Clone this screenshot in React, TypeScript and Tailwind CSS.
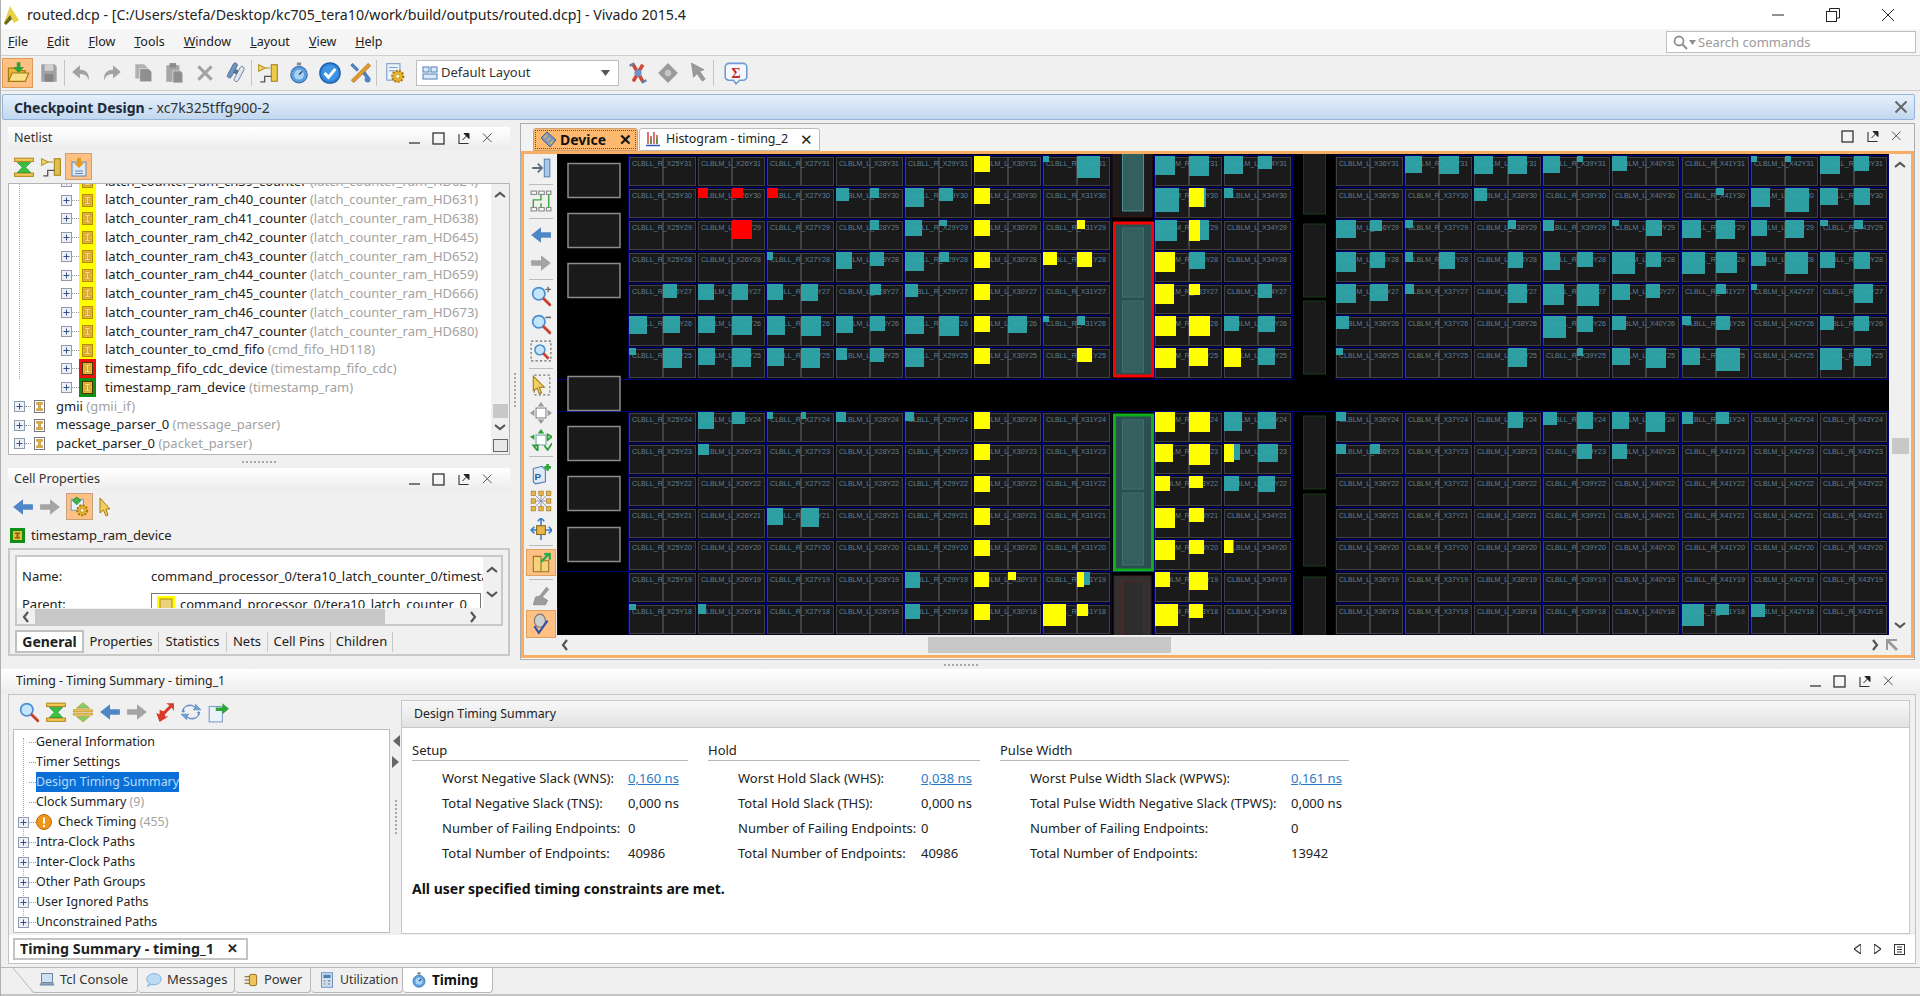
import React from "react";

const S = ({ s = 20, children }: { s?: number; children?: React.ReactNode }) => (
  <svg width={s} height={s} viewBox="0 0 20 20" className="shrink-0">{children}</svg>
);
const Mag = ({ sign }: { sign?: string }) => (
  <S s={22}>
    <circle cx="8" cy="8" r="5.6" fill="#c4e6fb" stroke="#4b90d2" strokeWidth="1.6" />
    <path d="M12.5 12.5L18 18" stroke="#c9402f" strokeWidth="2.6" strokeLinecap="round" />
    {sign === "+" && <path d="M14 4h5M16.5 1.5v5" stroke="#666" strokeWidth="1.2" />}
    {sign === "-" && <path d="M14 4h5" stroke="#666" strokeWidth="1.4" />}
  </S>
);
const BackArrow = ({ c = "#4f86c6", flip = false }: { c?: string; flip?: boolean }) => (
  <S s={22}>
    <path d={flip ? "M1 7.5h9V3l9 7-9 7v-4.500H1z" : "M19 7.5h-9V3l-9 7 9 7v-4.500h9z"} fill={c} />
  </S>
);
const Schem = ({ dim = false }: { dim?: boolean }) => (
  <S s={22}>
    <path d="M1.500 2.500l6 3-6 3z" fill="#f3d868" stroke="#b8962c" />
    <path d="M7.500 5.500H12" stroke="#b8962c" />
    <rect x="13" y="2.500" width="5.500" height="15" fill={dim ? "#e0c04a" : "#eecb4a"} stroke="#a6841c" />
    <path d="M13 13H7v5H3" stroke="#555" strokeWidth="1.200" fill="none" />
  </S>
);
const Hourglass = () => (
  <S s={22}>
    <rect x="1.500" y="2" width="17" height="3" fill="#f2c755" stroke="#b58b20" />
    <rect x="1.500" y="15.500" width="17" height="3" fill="#f2c755" stroke="#b58b20" />
    <path d="M4 6h12l-4.500 4.200L16 15H4l4.500-4.800z" fill="#37c23f" stroke="#1f8a28" strokeWidth=".6" />
  </S>
);
const Expand2 = () => (
  <S s={22}>
    <rect x="1.500" y="8" width="17" height="1.800" fill="#f2c755" stroke="#b58b20" strokeWidth=".6" />
    <rect x="1.500" y="11" width="17" height="1.800" fill="#f2c755" stroke="#b58b20" strokeWidth=".6" />
    <path d="M10 1.500l6 5H4zM10 19l6-5H4z" fill="#7ed06a" stroke="#c79a2a" strokeWidth=".7" />
  </S>
);
const Gear = ({ x = 11, y = 12, r = 5 }: { x?: number; y?: number; r?: number }) => (
  <g>
    <circle cx={x} cy={y} r={r} fill="#e9b82c" stroke="#a87a10" strokeWidth="2" strokeDasharray="1.800 1.200" />
    <circle cx={x} cy={y} r={r * 0.4} fill="#fff3c0" stroke="#a87a10" strokeWidth=".6" />
  </g>
);
const SettingsDoc = () => (
  <S s={22}>
    <rect x="2.500" y="1.500" width="12" height="15" fill="#eaf2fb" stroke="#7f9fc4" />
    <path d="M4.500 5h8M4.500 8h5" stroke="#7f9fc4" />
    <Gear x={12.500} y={13} r={5} />
  </S>
);
const CellIcon = ({ bg = "" }: { bg?: string }) => {
  const isY = bg === "#ffff00";
  return (
    <svg width="17" height="19" viewBox="0 0 17 19" className="shrink-0">
      {bg && <rect x="0" y="0" width="17" height="19" fill={bg} />}
      <rect x="3.500" y="3.500" width="10" height="12" fill={!bg ? "#fff" : "#e8b526"} stroke={!bg ? "#777" : isY ? "#b78a10" : "#4a3400"} />
      <path d="M5.500 5.500h6v1.800h-2v4.400h2v1.800h-6v-1.800h2V7.300h-2z" fill={bg ? "#f8dc86" : "#eeae22"} stroke={bg ? "#a87a10" : "#8a5d08"} strokeWidth=".4" />
    </svg>
  );
};
const Plus = () => (
  <span className="w-[11px] h-[11px] border border-[#8d9bb0] bg-[#eef0f6] flex items-center justify-center shrink-0">
    <svg width="9" height="9" viewBox="0 0 9 9"><path d="M1.500 4.500h6M4.500 1.500v6" stroke="#33508a" strokeWidth="1" /></svg>
  </span>
);
const Chev = ({ d }: { d: "u" | "d" | "l" | "r" }) => {
  const p = { u: "M2 8l5-4 5 4", d: "M2 5l5 4 5-4", l: "M9 2L5 7l4 5", r: "M5 2l4 5-4 5" }[d];
  return (
    <svg width="14" height="14" viewBox="0 0 14 14" className="shrink-0">
      <path d={p} fill="none" stroke="#555" strokeWidth="2.200" />
    </svg>
  );
};
const PanelCtl = ({ min = true }: { min?: boolean }) => (
  <div className="flex items-center gap-[9.5px] text-[#333]">
    {min && (
      <svg width="15" height="13" viewBox="0 0 15 13"><path d="M2 11h11" stroke="#444" strokeWidth="1.400" /></svg>
    )}
    <svg width="15" height="13" viewBox="0 0 15 13"><rect x="2" y="1" width="11" height="11" fill="none" stroke="#333" strokeWidth="1.300" /></svg>
    <svg width="15" height="13" viewBox="0 0 15 13"><path d="M3 2v9.500h9.500" fill="none" stroke="#333" strokeWidth="1.100" /><path d="M6.500 8L12 2.500M8 1.500h5v5z" stroke="#222" fill="#222" /></svg>
    <svg width="15" height="13" viewBox="0 0 15 13"><path d="M3 1.500l8.500 8.500M11.500 1.500L3 10" stroke="#555" strokeWidth="1" /></svg>
  </div>
);
const Tb = ({ children, active, w = "w-[31px]" }: { children: React.ReactNode; active?: boolean; w?: string }) => (
  <div className={`${w} h-[30px] flex items-center justify-center shrink-0 ${active ? "bg-[#ffc083] border border-[#e09a55]" : ""}`}>{children}</div>
);
const Sep = () => <div className="w-px h-[26px] bg-[#c4c4c4] shrink-0" />;
const Dots = ({ v = false }: { v?: boolean }) => (
  <div className={`flex ${v ? "flex-col" : ""} gap-[2px]`}>
    {Array.from({ length: 9 }).map((_, i) => (
      <span key={i} className="w-[2px] h-[2px] bg-[#a8a8a8]" />
    ))}
  </div>
);
const PanelHead = ({ title }: { title: string }) => (
  <div className="h-[23px] flex items-center justify-between pl-[6px] pr-[15px] bg-gradient-to-b from-[#ffffff] to-[#ececec] text-[12.6px] text-[#333] shrink-0">
    <span>{title}</span>
    <PanelCtl />
  </div>
);

const gray = "#a2a2a2";
const MainTools = () => (
  <div className="h-[36px] flex items-center pl-[1px] bg-[#f0f0f0] border-t border-b border-[#cfcfcf] shrink-0">
    <Tb active>
      <S s={24}>
        <path d="M2 6h6l2 2h6v9H2z" fill="#e8b93a" stroke="#a87a10" />
        <path d="M5 10h14l-3 7H2z" fill="#f9e08a" stroke="#a87a10" />
        <path d="M9 1h3v4h3l-4.500 5L6 5h3z" fill="#2f9f3a" />
      </S>
    </Tb>
    <Tb><S s={22}><path d="M3 2h12l2 2v14H3z" fill={gray} /><rect x="6" y="2" width="8" height="6" fill="#d0d0d0" /><rect x="6" y="11" width="8" height="7" fill="#868686" /></S></Tb>
    <Sep />
    <Tb><S s={22}><path d="M2 9l7-6v4c6 0 9 4 8 10-1-4-3-6-8-6v4z" fill={gray} /></S></Tb>
    <Tb><S s={22}><path d="M18 9l-7-6v4C5 7 2 11 3 17c1-4 3-6 8-6v4z" fill={gray} /></S></Tb>
    <Tb><S s={22}><path d="M3 2h8l3 3v10H3z" fill="#b0b0b0" /><path d="M7 6h8l3 3v9H7z" fill="#8f8f8f" stroke="#f0f0f0" strokeWidth=".6" /></S></Tb>
    <Tb><S s={22}><rect x="3" y="3" width="12" height="15" fill="#a6a6a6" /><rect x="6" y="1" width="6" height="4" fill="#8b8b8b" /><path d="M9 8h7l2 2v9H9z" fill="#8f8f8f" stroke="#f0f0f0" strokeWidth=".6" /></S></Tb>
    <Tb><S s={22}><path d="M4 4l12 12M16 4L4 16" stroke={gray} strokeWidth="2.800" /></S></Tb>
    <Tb><S s={22}><g transform="rotate(28 10 10)"><rect x="4" y="2" width="4" height="15" rx="2" fill="#6f93c4" stroke="#475f80" strokeWidth=".6" /><rect x="11" y="2" width="4" height="15" rx="2" fill="#dfe7f0" stroke="#475f80" strokeWidth=".6" /><rect x="8" y="7" width="3" height="4" fill="#5a6f8c" /></g></S></Tb>
    <Sep />
    <Tb><Schem /></Tb>
    <Tb><S s={22}><rect x="8" y="0.500" width="4" height="2.500" fill="#888" /><circle cx="10" cy="11.500" r="7.500" fill="#5a9fe0" stroke="#3b6fa8" /><circle cx="10" cy="11.500" r="4.500" fill="#a9d3f5" /><path d="M10 11.500l3-3" stroke="#235" strokeWidth="1.200" /></S></Tb>
    <Tb><S s={24}><circle cx="10" cy="10" r="8.500" fill="#2f84dc" stroke="#1d5ea8" /><circle cx="10" cy="10" r="6.500" fill="#3f95e6" /><path d="M5.500 10l3.200 3.500L14.500 6.500" stroke="#fff" strokeWidth="2.400" fill="none" /></S></Tb>
    <Tb><S s={24}><path d="M3 2l5 5-1.500 1.500-5-5zM17 14l-5-7-2 2 7 8z" fill="#4f86c6" stroke="#2f5f9a" strokeWidth=".6" /><path d="M16 2l-14 14 2 2L18 4z" fill="#e69a2a" stroke="#9c6610" strokeWidth=".6" /><circle cx="15.500" cy="15.500" r="2.500" fill="#4f86c6" /></S></Tb>
    <Sep />
    <Tb w="w-[36px]"><SettingsDoc /></Tb>
    <div className="ml-[3px] w-[203px] h-[26px] bg-white border border-[#bdbdbd] flex items-center pl-[5px] pr-[8px] gap-[3px] text-[13px] text-[#333] shrink-0">
      <svg width="16" height="14" viewBox="0 0 16 14"><rect x="1" y="1" width="6" height="5" fill="#dbe8f7" stroke="#4f7fb5" /><rect x="9" y="1" width="6" height="5" fill="#dbe8f7" stroke="#4f7fb5" /><rect x="1" y="8" width="14" height="5" fill="#dbe8f7" stroke="#4f7fb5" /></svg>
      <span className="flex-1">Default Layout</span>
      <svg width="9" height="6" viewBox="0 0 9 6"><path d="M0 0h9L4.500 6z" fill="#555" /></svg>
    </div>
    <div className="w-[4px] shrink-0" />
    <Tb w="w-[30px]"><S s={24}><path d="M6 3l8 14M14 3L6 17" stroke="#d04a3a" strokeWidth="3" /><circle cx="10" cy="10" r="3" fill="#6f93c4" /><path d="M3 4l4-2M13 18l4-2" stroke="#5f7fa8" strokeWidth="2" /></S></Tb>
    <Tb w="w-[30px]"><S s={22}><path d="M10 1l9 9-9 9-9-9z" fill="#9a9a9a" /><circle cx="10" cy="10" r="3" fill="#c4c4c4" /></S></Tb>
    <Tb w="w-[30px]"><S s={22}><path d="M4 1l2 13 3-3.500 5 7 2.500-2-5-7 4-1.500z" fill="#9a9a9a" stroke="#777" strokeWidth=".5" /></S></Tb>
    <Sep />
    <Tb w="w-[44px]"><S s={24}><path d="M4 2h12a3 3 0 013 3v8a3 3 0 01-3 3h-3l-3 3-2-3H4a3 3 0 01-3-3V5a3 3 0 013-3z" fill="#f6f8fb" stroke="#6e9bd0" strokeWidth="1.300" /><text x="10" y="14" textAnchor="middle" fontSize="12" fontWeight="700" fill="#c92a2a" fontFamily="'Liberation Serif',serif">Σ</text></S></Tb>
  </div>
);

const Row = ({ lvl, name, type, bg }: { lvl: 1 | 2; name: string; type: string; bg?: string }) => (
  <div className="h-[18.75px] flex items-center">
    <div className={lvl === 2 ? "w-[52px] shrink-0" : "w-[5px] shrink-0"} />
    <Plus />
    <span className={`${lvl === 2 ? "w-[7px]" : "w-[6px]"} border-t border-dotted border-[#999] shrink-0`} />
    <CellIcon bg={bg} />
    <span className={`${lvl === 2 ? "ml-[9px]" : "ml-[8px]"} whitespace-nowrap text-[#222]`}>
      {name} <span className="text-[#a2a2a2]">({type})</span>
    </span>
  </div>
);

const Netlist = () => {
  const y = "#ffff00";
  const rows: [string, string][] = [39, 40, 41, 42, 43, 44, 45, 46, 47].map((n, i) => [`latch_counter_ram_ch${n}_counter`, `latch_counter_ram_HD${624 + i * 7}`]);
  return (
    <div className="h-[272px] shrink-0 bg-white border border-[#b4b4b4] flex text-[13px] overflow-hidden">
      <div className="flex-1 overflow-hidden relative">
        <div className="absolute left-[10px] top-0 h-[195px] border-l border-dotted border-[#aaa]" />
        <div className="-mt-[12px] relative">
          {rows.map(([a, b]) => <Row key={a} lvl={2} name={a} type={b} bg={y} />)}
          <Row lvl={2} name="latch_counter_to_cmd_fifo" type="cmd_fifo_HD118" bg={y} />
          <Row lvl={2} name="timestamp_fifo_cdc_device" type="timestamp_fifo_cdc" bg="#f01010" />
          <Row lvl={2} name="timestamp_ram_device" type="timestamp_ram" bg="#0f8f16" />
          <Row lvl={1} name="gmii" type="gmii_if" />
          <Row lvl={1} name="message_parser_0" type="message_parser" />
          <Row lvl={1} name="packet_parser_0" type="packet_parser" />
        </div>
      </div>
      <div className="w-[18px] shrink-0 bg-[#f0f0f0] flex flex-col items-center pt-[5px]">
        <Chev d="u" />
        <div className="flex-1" />
        <div className="w-[15px] h-[14px] bg-[#c8c8c8] mb-[2px]" />
        <Chev d="d" />
        <div className="w-[15px] h-[13px] border border-[#666] mt-[5px] mb-[2px] bg-[#e8e8e8]" />
      </div>
    </div>
  );
};

const CellProps = () => (
  <>
    <div className="h-[31px] flex items-center pl-[4px] gap-[5px] shrink-0">
      <BackArrow />
      <BackArrow c="#a4a4a4" flip />
      <div className="w-[27px] h-[27px] bg-[#ffc083] border border-[#c9a07c] flex items-center justify-center">
        <S s={22}><rect x="2" y="3" width="11" height="10" fill="#eaf2fb" stroke="#7f9fc4" /><path d="M7 1l4 3-4 4-4-4z" fill="#42b54a" stroke="#227a2a" strokeWidth=".6" /><Gear x={12} y={13} r={4.500} /></S>
      </div>
      <svg width="14" height="22" viewBox="0 0 14 22"><path d="M2 2l10 11H8l2 6-2 1-2.500-6L2 17z" fill="#f2cf62" stroke="#a87a10" /></svg>
    </div>
    <div className="h-[26px] pt-[1px] flex items-center pl-[2px] gap-[6px] text-[13px] text-[#222] shrink-0">
      <svg width="15" height="15" viewBox="0 0 15 15"><rect width="15" height="15" fill="#0f8f16" /><rect x="3" y="3" width="9" height="9" fill="#e9b93a" /><path d="M5 4.500h5v1.500H8.500v3H10v1.500H5V9h1.500V6H5z" fill="#8a5d08" /></svg>
      <span>timestamp_ram_device</span>
    </div>
    <div className="h-[108px] border-2 border-[#c8c8c8] p-[5px] flex flex-col text-[13px] text-[#222] shrink-0">
      <div className="h-[71px] border-2 border-[#c8c8c8] flex flex-col shrink-0 overflow-hidden">
        <div className="flex h-[51px] shrink-0">
          <div className="flex-1 bg-white overflow-hidden min-w-0">
            <div className="flex items-center h-[40px] pl-[5px]">
              <span className="w-[129px] shrink-0">Name:</span>
              <span className="whitespace-nowrap">command_processor_0/tera10_latch_counter_0/timestamp_ram_device</span>
            </div>
            <div className="flex pl-[5px] -mt-[4px]">
              <span className="w-[129px] shrink-0 pt-[2px]">Parent:</span>
              <div className="w-[330px] h-[24px] border border-[#777] flex items-center gap-[5px] pl-[5px] whitespace-nowrap overflow-hidden shrink-0">
                <svg width="18" height="18" viewBox="0 0 18 18" className="shrink-0"><rect width="18" height="18" fill="#ffff00" /><rect x="3" y="3" width="12" height="12" fill="#e9d27a" stroke="#b78a10" /></svg>
                command_processor_0/tera10_latch_counter_0
              </div>
            </div>
          </div>
          <div className="w-[18px] shrink-0 bg-[#f0f0f0] flex flex-col items-center justify-around py-[3px]"><Chev d="u" /><Chev d="d" /></div>
        </div>
        <div className="h-[18px] flex items-center bg-[#f0f0f0] shrink-0">
          <div className="w-[18px] flex justify-center"><Chev d="l" /></div>
          <div className="w-[350px] h-[17px] bg-[#c8c8c8]" />
          <div className="flex-1 flex justify-end pr-[21px]"><Chev d="r" /></div>
        </div>
      </div>
      <div className="flex items-center h-[24px] mt-[4px] whitespace-nowrap">
        <span className="w-[69px] h-[23px] bg-white border-2 border-[#c0c0c0] font-bold text-[14px] flex items-center justify-center">General</span>
        {[["Properties", 75], ["Statistics", 68], ["Nets", 41], ["Cell Pins", 63], ["Children", 62]].map(([t, w]) => (
          <span key={t as string} style={{ width: w as number }} className="h-[20px] border-r border-[#c8c8c8] flex items-center justify-center">{t}</span>
        ))}
      </div>
    </div>
  </>
);

/* ---- device picture ---- */
const colX = [629, 698, 767, 836, 905, 974, 1043, 1155, 1224, 1336, 1405, 1474, 1543, 1612, 1682, 1751, 1820];
const colName = ["CLBLL_R_X25", "CLBLM_L_X26", "CLBLL_R_X27", "CLBLM_L_X28", "CLBLL_R_X29", "CLBLM_L_X30", "CLBLL_R_X31", "CLBLM_R_X33", "CLBLM_L_X34", "CLBLM_L_X36", "CLBLM_R_X37", "CLBLM_L_X38", "CLBLL_R_X39", "CLBLM_L_X40", "CLBLL_R_X41", "CLBLM_L_X42", "CLBLL_R_X43"];
const rowY = [156, 188, 220, 252, 284, 316, 348, 412, 444, 476, 508, 540, 572, 604];
const rowN = [31, 30, 29, 28, 27, 26, 25, 24, 23, 22, 21, 20, 19, 18];
const blocks: string[] = [
  "5 0 16 16 1,6 0 6 6,6 1 23 22,7 0 20 19,7 1 20 20,8 0 19 18,8 1 14 13,10 0 17 17,10 1 20 18,11 0 19 18,11 1 19 18,12 0 17 17,12 1 6 6,13 0 15 15,15 0 6 6,15 1 6 6,16 0 20 18,16 1 15 15",
  "1 0 10 10 2,1 1 11 10 2,2 0 11 10 2,3 0 13 13,3 1 9 10,4 0 19 19,4 1 14 13,5 0 16 16 1,7 0 24 24,7 1 17 19,7 1 15 19 1,8 0 9 10,11 0 13 13,14 1 8 7,15 0 19 19,15 1 24 24,16 0 18 17,16 1 16 17",
  "1 1 20 19 2,3 1 9 10,4 0 17 16,4 1 8 6,5 0 16 16 1,6 1 8 9 1,7 0 22 21,7 1 20 20,7 1 11 21 1,9 0 20 18,9 1 12 11,10 0 8 8,11 1 8 9,12 0 11 11,13 0 7 6,13 1 16 16,14 0 19 18,14 1 19 19,15 0 16 16,15 1 19 18,16 0 8 6,16 1 9 9",
  "2 0 6 8,3 0 16 17,3 1 14 14,4 0 19 19,4 1 10 10,5 0 16 16 1,6 0 14 13 1,6 1 15 15 1,7 0 20 20 1,7 1 16 17,9 0 20 20,9 1 15 16,10 0 8 10,10 1 16 17,11 1 15 16,12 0 17 18,12 1 16 15,13 0 23 22,13 1 15 15,14 0 23 22,14 1 21 21,15 0 15 14,15 1 23 22,16 0 15 16,16 1 16 17",
  "0 1 14 14,1 0 16 16,1 1 16 16,2 0 16 16,2 1 17 17,3 1 11 11,4 0 13 13,5 0 16 16 1,7 0 19 20 1,7 1 11 11 1,8 1 14 14,9 0 20 19,9 1 18 17,10 0 9 10,11 1 19 19,12 0 21 21,12 1 22 22,13 0 18 16,13 1 14 14,14 1 10 10,15 0 6 6,16 1 19 19",
  "0 0 18 18,0 1 17 17,1 0 17 17,1 1 20 19,2 0 18 19,2 1 20 20,3 0 17 17,3 1 15 15,4 0 19 18,4 1 20 20,5 0 16 16 1,5 1 19 17,6 0 6 6,6 1 8 9,7 0 21 20 1,7 1 21 20 1,8 0 15 15,8 1 17 16,9 0 13 13,12 0 23 22,12 1 16 16,13 0 14 14,14 0 9 9,14 1 14 14,16 0 14 14,16 1 15 15",
  "0 0 7 7,0 1 19 20,1 0 17 17,1 1 19 19,2 0 17 18,2 1 19 20,3 0 11 12,3 1 14 14,4 0 19 19,5 0 16 16 1,6 1 15 14 1,7 0 21 20 1,7 1 19 18 1,8 0 17 19 1,8 1 17 17,9 0 7 7,11 1 19 19,12 1 6 8,13 0 18 17,13 1 20 20,14 0 18 17,14 1 24 23,16 0 22 22,16 1 17 18",
  "1 0 16 17,1 1 13 12,2 0 6 7,2 1 5 7,3 0 10 10,4 0 9 9,5 0 16 17 1,7 0 20 20 1,7 1 21 20 1,8 0 18 19,8 1 18 17,9 0 10 9,11 1 15 16,12 0 14 13,12 1 16 17,13 0 17 17,13 1 19 20,14 0 11 12,14 1 13 12",
  "1 0 11 11,5 0 16 16 1,7 0 18 18 1,7 1 21 21 1,8 0 16 16,8 0 10 18 1,8 1 20 18,9 0 10 10,9 1 10 10,12 1 15 15,13 0 15 15",
  "5 0 16 16 1,7 0 15 15 1,7 1 14 12 1,8 0 15 15,8 1 17 16",
  "2 0 16 17,2 1 18 19,5 0 16 17 1,7 0 20 20 1,7 1 15 14 1",
  "5 0 16 16 1,7 0 20 20 1,7 1 15 14 1,8 0 10 13,8 0 9 13 1",
  "4 0 15 16,5 0 15 15 1,5 1 8 8 1,6 1 13 13,6 1 7 15 1,7 0 15 15 1,7 1 19 18 1",
  "0 0 7 6,1 0 8 10,4 0 15 15,5 0 16 16 1,6 0 23 22 1,6 1 11 12 1,7 0 23 22 1,7 1 14 14 1,14 0 22 22,14 1 13 11,15 0 14 13",
];
const fillOf = ["#2fa9ac", "#ffff00", "#ff0000"];

const Bram = ({ y, h, border, sw, fill, inner, innerStroke }: { y: number; h: number; border: string; sw: number; fill: string; inner: [number, number][]; innerStroke: string }) => (
  <g>
    <rect x={1114 + sw / 2 - 1} y={y} width={39 - sw + 2} height={h} fill={fill} stroke={border} strokeWidth={sw} />
    {inner.map(([a, b], i) => (
      <rect key={i} x="1122.500" y={a} width="21" height={b - a} fill="#33605f" stroke={innerStroke} />
    ))}
  </g>
);

const Device = () => (
  <svg width="1332" height="481" viewBox="557 154 1332 481" className="block shrink-0 bg-black">
    <path d="M557.500 154v481" stroke="#000078" />
    <path d="M557 379.500h1332M557 411.500h1332M557 571.500h1332M628.500 154v226" stroke="#000078" />
    {[[163, 34], [213, 34], [263, 34], [376, 34], [426, 34], [476, 34], [527, 34]].map(([y, h]) => (
      <rect key={y} x="568" y={y + 0.5} width="52" height={h} fill="#1a1a1a" stroke="#8c8c8c" strokeWidth="1.500" />
    ))}
    {rowY.map((ry, ri) => colX.map((cx, ci) => (
      <g key={`${ri}-${ci}`}>
        <rect x={cx - 0.5} y={ry - 0.5} width="69" height="32" fill="#06061c" stroke="#000078" />
        <rect x={cx + 0.5} y={ry + 1.500} width="33" height="28" fill="#1a1a1a" stroke="#414141" />
        <rect x={cx + 34.500} y={ry + 1.500} width="32" height="28" fill="#1a1a1a" stroke="#414141" />
        <text x={cx + 3} y={ry + 10} fontSize="7.500" fill="#5f8098" textLength="60" lengthAdjust="spacingAndGlyphs" fontFamily="'Liberation Sans',sans-serif">{`${colName[ci]}Y${rowN[ri]}`}</text>
      </g>
    )))}
    {blocks.map((line, ri) => line.split(",").map((b, i) => {
      const [c, s, w, h, k = 0] = b.split(" ").map(Number);
      return <rect key={`${ri}-${i}`} x={colX[c] + (s ? 34 : 0)} y={rowY[ri]} width={w} height={h} fill={fillOf[k]} fillOpacity={k ? 1 : 0.93} />;
    }))}
    <rect x="1113" y="150" width="39" height="67" fill="#1f1a1a" stroke="#3d1414" />
    <rect x="1122.500" y="150" width="21" height="61" fill="#33605f" stroke="#4a9090" />
    <Bram y={223} h={153} border="#ff0000" sw={3} fill="#2b4f50" inner={[[228, 297], [301, 372]]} innerStroke="#3f6f70" />
    <Bram y={415} h={155} border="#0fae1a" sw={3} fill="#2b4f50" inner={[[420, 489], [493, 565]]} innerStroke="#3f6f70" />
    <rect x="1114" y="576" width="37" height="70" fill="#333030" stroke="#3a2020" />
    <rect x="1122.500" y="581" width="21" height="60" fill="#2e2c2c" stroke="#5a2525" />
    <rect x="1293" y="150" width="42" height="230" fill="#000" />
    <rect x="1293" y="412" width="42" height="230" fill="#000" />
    {[[150, 214], [224, 297], [301, 374], [416, 489], [494, 566], [577, 650]].map(([a, b]) => (
      <rect key={a} x="1303.500" y={a} width="22" height={b - a} fill="#1a1a1a" stroke="#173a17" />
    ))}
  </svg>
);

const SideTb = () => {
  const Cell = ({ children, active }: { children: React.ReactNode; active?: boolean }) => (
    <div className={`h-[27.6px] w-[30px] flex items-center justify-center shrink-0 ${active ? "bg-[#ffc083] border border-[#e0a060]" : ""}`}>{children}</div>
  );
  const Sp = () => <div className="h-[6px] flex items-center shrink-0"><div className="w-[24px] h-px bg-[#bcbcbc]" /></div>;
  return (
    <div className="w-[33px] shrink-0 bg-[#f0f0f0] flex flex-col items-center">
      <Cell><S s={22}><path d="M2 10h8M7 6l4 4-4 4" stroke="#5c6c80" strokeWidth="1.600" fill="none" /><rect x="13" y="2" width="5" height="16" fill="#a8c8ea" stroke="#5e87b5" /></S></Cell>
      <Sp />
      <Cell><S s={22}><rect x="1" y="1" width="5" height="3" fill="#fff" stroke="#888" /><rect x="8" y="1" width="5" height="3" fill="#fff" stroke="#888" /><rect x="15" y="1" width="4" height="3" fill="#fff" stroke="#888" /><rect x="1" y="16" width="5" height="3" fill="#fff" stroke="#888" /><rect x="8" y="16" width="5" height="3" fill="#fff" stroke="#888" /><rect x="15" y="16" width="4" height="3" fill="#fff" stroke="#888" /><path d="M3 16V9h7V4M17 16V4M10 16v-4" stroke="#3aa93a" strokeWidth="1.300" fill="none" /></S></Cell>
      <Sp />
      <Cell><BackArrow /></Cell>
      <Cell><BackArrow c="#a4a4a4" flip /></Cell>
      <Sp />
      <Cell><Mag sign="+" /></Cell>
      <Cell><Mag sign="-" /></Cell>
      <Cell><S s={22}><rect x="1" y="1" width="18" height="18" fill="none" stroke="#666" strokeDasharray="2 2" /><circle cx="9" cy="9" r="4.500" fill="#c4e6fb" stroke="#4b90d2" strokeWidth="1.400" /><path d="M12 12l5 5" stroke="#c9402f" strokeWidth="2.400" /></S></Cell>
      <Sp />
      <Cell><S s={22}><rect x="4" y="1" width="14" height="18" fill="none" stroke="#777" strokeDasharray="2 2" /><path d="M3 2l10 10H8.500l2 5-2 1-2-5L3 15z" fill="#f2cf62" stroke="#a87a10" /></S></Cell>
      <Cell><S s={22}><rect x="5.500" y="5.500" width="9" height="9" fill="#fff" stroke="#888" /><path d="M10 0l3 4H7zM10 20l3-4H7zM0 10l4-3v6zM20 10l-4-3v6z" fill="#9a9a9a" /></S></Cell>
      <Cell><S s={22}><rect x="5.500" y="5.500" width="9" height="9" fill="#fff" stroke="#7aa" /><path d="M10 0l3 4H7z" fill="#2f9f3a" /><path d="M0 7l4-2v5z" fill="#2f9f3a" /><path d="M20 7l-4-2v5zM7 20l-4-5h4zM13 15l3 4 4-6" stroke="#2f9f3a" strokeWidth="1.600" fill="none" /></S></Cell>
      <Sp />
      <Cell><S s={22}><path d="M3 5l8-2 3 3v11l-9 2-2-2z" fill="#dfeaf7" stroke="#4f7fb5" /><text x="4" y="15" fontSize="9" fontWeight="700" fill="#2f5f9a" fontFamily="'Liberation Sans',sans-serif">P</text><path d="M13 4h6M16 1v6" stroke="#2fa43a" strokeWidth="2.400" /></S></Cell>
      <Cell><S s={22}><g fill="#eab541" stroke="#8a6a1c" strokeWidth=".5"><rect x="1" y="1" width="4" height="4" /><rect x="8" y="1" width="4" height="4" /><rect x="15" y="1" width="4" height="4" /><rect x="1" y="8" width="4" height="4" /><rect x="15" y="8" width="4" height="4" /><rect x="1" y="15" width="4" height="4" /><rect x="8" y="15" width="4" height="4" /><rect x="15" y="15" width="4" height="4" /></g><path d="M5 5l10 10M15 5L5 15M10 5v10M5 10h10" stroke="#88a" strokeWidth=".8" /></S></Cell>
      <Cell><S s={22}><rect x="6" y="7" width="8" height="8" fill="#eab541" stroke="#8a6a1c" /><path d="M10 7V1M7 3l3-3 3 3M14 11h5M17 8l3 3-3 3M6 11H1M4 8l-3 3 3 3M10 15v5" stroke="#3d7cc4" strokeWidth="1.400" fill="none" /></S></Cell>
      <Sp />
      <Cell active><S s={22}><path d="M3 4h7v14H3zM10 8h7v10h-7" fill="#f3d27b" stroke="#9a7526" /><path d="M10 9l8-8M13 2h5v5" stroke="#2da84a" strokeWidth="2" fill="none" /></S></Cell>
      <Sp />
      <Cell><S s={22}><path d="M15 2l2 2-6 7 5 3-2 4H3l2-7 4-1z" fill="#9c9c9c" stroke="#7f7f7f" strokeWidth=".6" /></S></Cell>
      <Cell active><S s={22}><ellipse cx="9" cy="7" rx="5" ry="6" fill="#cfcfcf" stroke="#777" /><path d="M4 12l4 6 8-11" stroke="#3552a8" strokeWidth="2" fill="none" /></S></Cell>
    </div>
  );
};

const DevicePanel = () => (
  <div className="w-[1395px] h-[537px] shrink-0 ml-[10px] border border-[#adadad] bg-gradient-to-b from-[#f2f2f2] to-[#ffffff] flex flex-col">
    <div className="h-[27px] flex items-end pl-[12px] pr-[10px] shrink-0">
      <div className="w-[105px] h-[23px] bg-[#fdb970] border border-[#c9a27a] rounded-t-[3px] flex items-center pl-[5px] pr-[5px] text-[14px] font-bold text-[#111] outline-dotted outline-1 -outline-offset-3 outline-[#555]">
        <svg width="18" height="18" viewBox="0 0 18 18" className="shrink-0"><path d="M2 7l6-6 9 8-6 7z" fill="#7f97c0" stroke="#47628f" /><path d="M5 7l3-3M8 10l3-3M11 13l3-3" stroke="#e0bf45" strokeWidth="1.400" /></svg>
        <span className="ml-[3px] flex-1">Device</span>
        <span className="text-[15px] leading-none">✕</span>
      </div>
      <div className="w-[181px] h-[23px] bg-white border border-[#bbb] rounded-t-[3px] flex items-center pl-[5px] text-[12.4px] text-[#222] ml-[1px]">
        <svg width="17" height="17" viewBox="0 0 17 17" className="shrink-0"><path d="M3 1v12M6 5v8M9 1v12M12 4v9" stroke="#c62828" strokeWidth="1.300" /><path d="M6 8v5M12 7v6" stroke="#2e9e2e" strokeWidth="1.300" /><path d="M1 14.500h14" stroke="#3355bb" strokeWidth="1.500" /></svg>
        <span className="ml-[4px] flex-1">Histogram - timing_2</span>
        <span className="text-[15px] leading-none pr-[6px]">✕</span>
      </div>
      <div className="flex-1" />
      <div className="pb-[8px]"><PanelCtl min={false} /></div>
    </div>
    <div className="h-[507px] border-[3px] border-[#f9ad64] flex shrink-0">
      <SideTb />
      <div className="flex-1 flex flex-col min-w-0">
        <div className="flex h-[481px] shrink-0">
          <Device />
          <div className="flex-1 bg-[#f0f0f0] flex flex-col items-center pt-[5px]">
            <Chev d="u" />
            <div className="h-[265px] shrink-0" />
            <div className="w-[17px] h-[16px] bg-[#c8c8c8] shrink-0" />
            <div className="flex-1" />
            <div className="pb-[3px]"><Chev d="d" /></div>
          </div>
        </div>
        <div className="flex-1 bg-[#f0f0f0] flex items-center">
          <div className="w-[16px] flex justify-center"><Chev d="l" /></div>
          <div className="w-[355px] shrink-0" />
          <div className="w-[243px] h-[16px] bg-[#c8c8c8] shrink-0" />
          <div className="flex-1" />
          <div className="pr-[12px] flex items-center gap-[3px]"><Chev d="r" /><svg width="14" height="14" viewBox="0 0 14 14"><path d="M1 1h11v2H5l8 8-2 2-8-8v7H1z" fill="#9a9a9a" /></svg></div>
        </div>
      </div>
    </div>
  </div>
);

/* ---- timing ---- */
const TTree = ({ t, n, plus, warn, sel }: { t: string; n?: string; plus?: boolean; warn?: boolean; sel?: boolean }) => (
  <div className="h-[20px] flex items-center shrink-0">
    <div className="w-[4px] shrink-0" />
    {plus ? <Plus /> : <span className="w-[11px] shrink-0" />}
    <span className="w-[7px] border-t border-dotted border-[#999] shrink-0" />
    {warn && (
      <svg width="16" height="16" viewBox="0 0 16 16" className="mr-[6px] shrink-0"><circle cx="8" cy="8" r="7.500" fill="#f0961a" stroke="#b86a08" /><path d="M8 3.500v6M8 11v2" stroke="#fff" strokeWidth="2" /></svg>
    )}
    <span className={`h-[20px] flex items-center whitespace-nowrap ${sel ? "bg-[#0a6fd6] text-[#b8dcff]" : "text-[#222]"}`}>
      {t}{n && <span className="text-[#a2a2a2]">&nbsp;({n})</span>}
    </span>
  </div>
);

const SumGroup = ({ title, w, lw, rows, ml }: { title: string; w: number; lw: number; ml: number; rows: [string, string, boolean?][] }) => (
  <div style={{ width: w, marginLeft: ml }} className="shrink-0">
    <div className="h-[22px] pt-[2px] border-b border-[#b8b8b8] flex items-center">{title}</div>
    <div className="mt-[5px] pl-[30px]">
      {rows.map(([a, b, link]) => (
        <div key={a} className="h-[25px] flex items-center whitespace-nowrap">
          <span style={{ width: lw }} className="shrink-0">{a}</span>
          <span className={link ? "text-[#2a7ac8] underline" : ""}>{b}</span>
        </div>
      ))}
    </div>
  </div>
);

const Timing = () => (
  <div className="h-[295px] shrink-0 flex flex-col text-[13px] text-[#222]">
    <div className="h-[25px] flex items-center justify-between pl-[15px] pr-[24px] bg-gradient-to-b from-[#ffffff] to-[#ececec] shrink-0">
      <span className="text-[12.3px]">Timing - Timing Summary - timing_1</span>
      <PanelCtl />
    </div>
    <div className="flex-1 mx-[7px] mr-[4px] border border-[#c4c4c4] flex flex-col bg-white min-h-0">
      <div className="h-[240px] flex shrink-0 bg-[#f0f0f0]">
        <div className="w-[381px] shrink-0 flex flex-col pl-[4px]">
          <div className="h-[34px] flex items-center gap-[5px] pl-[5px] shrink-0">
            <Mag />
            <Hourglass />
            <Expand2 />
            <BackArrow />
            <BackArrow c="#a4a4a4" flip />
            <S s={22}><path d="M9 10l6-6-3-2h7v7l-2-3-7 7zM11 10v4l3 0-8 5-3-8 3 1v-4z" fill="#d83a2c" /></S>
            <S s={22}><path d="M2 10a7 6 0 0112-4V3l5 5h-7l2-2a5 4 0 00-10 4zM18 10a7 6 0 01-12 4v3l-5-5h7l-2 2a5 4 0 0010-4z" fill="#6fa7df" stroke="#3a70ad" strokeWidth=".5" /></S>
            <S s={22}><rect x="2" y="5" width="12" height="14" fill="#eaf2fb" stroke="#7f9fc4" /><path d="M8 6h6V2l6 5-6 5V9H8z" fill="#2fa43a" /></S>
          </div>
          <div className="flex-1 bg-white border border-[#bcbcbc] py-[2px] min-h-0 relative mb-[2px] text-[12.4px]">
            <div className="absolute left-[9px] top-[8px] h-[182px] border-l border-dotted border-[#aaa]" />
            <div className="relative">
              <TTree t="General Information" />
              <TTree t="Timer Settings" />
              <TTree t="Design Timing Summary" sel />
              <TTree t="Clock Summary" n="9" />
              <TTree t="Check Timing" n="455" plus warn />
              <TTree t="Intra-Clock Paths" plus />
              <TTree t="Inter-Clock Paths" plus />
              <TTree t="Other Path Groups" plus />
              <TTree t="User Ignored Paths" plus />
              <TTree t="Unconstrained Paths" plus />
            </div>
          </div>
        </div>
        <div className="w-[11px] shrink-0 flex flex-col items-center pt-[40px]">
          <svg width="8" height="12" viewBox="0 0 8 12"><path d="M8 0v12L1 6z" fill="#666" /></svg>
          <svg width="8" height="12" viewBox="0 0 8 12" className="mt-[9px]"><path d="M0 0v12l7-6z" fill="#666" /></svg>
          <div className="mt-[32px]"><Dots v /></div>
        </div>
        <div className="flex-1 flex flex-col pt-[5px] pb-[1px] pr-[5px] min-w-0">
          <div className="h-[28px] flex items-center pl-[12px] bg-gradient-to-b from-[#f8f8f8] to-[#e2e2e2] border border-[#c8c8c8] text-[12.3px] shrink-0">Design Timing Summary</div>
          <div className="flex-1 bg-white border-x border-b border-[#c8c8c8] pl-[10px] pt-[11px] min-h-0">
            <div className="flex">
              <SumGroup title="Setup" w={276} lw={186} ml={0} rows={[["Worst Negative Slack (WNS):", "0,160 ns", true], ["Total Negative Slack (TNS):", "0,000 ns"], ["Number of Failing Endpoints:", "0"], ["Total Number of Endpoints:", "40986"]]} />
              <SumGroup title="Hold" w={272} lw={183} ml={20} rows={[["Worst Hold Slack (WHS):", "0,038 ns", true], ["Total Hold Slack (THS):", "0,000 ns"], ["Number of Failing Endpoints:", "0"], ["Total Number of Endpoints:", "40986"]]} />
              <SumGroup title="Pulse Width" w={349} lw={261} ml={20} rows={[["Worst Pulse Width Slack (WPWS):", "0,161 ns", true], ["Total Pulse Width Negative Slack (TPWS):", "0,000 ns"], ["Number of Failing Endpoints:", "0"], ["Total Number of Endpoints:", "13942"]]} />
            </div>
            <div className="mt-[12px] font-bold text-[14px] text-[#111]">All user specified timing constraints are met.</div>
          </div>
        </div>
      </div>
      <div className="flex-1 flex items-center justify-between pl-[4px] pr-[10px]">
        <div className="w-[235px] h-[22px] border-2 border-[#c4c4c4] flex items-center pl-[5px] pr-[8px] font-bold text-[14.3px] text-[#222] justify-between whitespace-nowrap"><span>Timing Summary - timing_1</span><span className="text-[13px]">✕</span></div>
        <div className="flex items-center gap-[13px]">
          <svg width="7" height="10" viewBox="0 0 7 10"><path d="M7 0v10L0 5z" fill="none" stroke="#333" strokeWidth="1.200" /></svg>
          <svg width="7" height="10" viewBox="0 0 7 10"><path d="M0 0v10l7-5z" fill="none" stroke="#333" strokeWidth="1.200" /></svg>
          <svg width="11" height="11" viewBox="0 0 11 11"><rect x=".5" y=".5" width="10" height="10" fill="none" stroke="#333" /><path d="M3 3h5M3 5.500h5M3 8h5" stroke="#333" /></svg>
        </div>
      </div>
    </div>
  </div>
);

const BTab = ({ w, icon, children, active }: { w: number; icon: React.ReactNode; children: React.ReactNode; active?: boolean }) => (
  <div style={{ width: w }} className={`h-[25px] flex items-center gap-[5px] pl-[8px] shrink-0 border-r border-b border-[#b8b8b8] rounded-b-[4px] ${active ? "bg-white font-bold text-[13.5px] text-[#111]" : "text-[#333]"}`}>
    {icon}
    <span className="whitespace-nowrap">{children}</span>
  </div>
);

const BottomTabs = () => (
  <div className="h-[32px] shrink-0 pt-[3px] text-[13px] bg-[#f0f0f0] border-b-2 border-[#c4c4c4]">
    <div className="h-[26px] border-t border-[#b8b8b8] flex pl-[30px] relative">
      <svg width="24" height="25" viewBox="0 0 24 25" className="absolute left-[8px] top-0"><path d="M4 0l20 24" stroke="#b8b8b8" fill="none" /></svg>
      <BTab w={107} icon={<S s={16}><rect x="3" y="2" width="14" height="11" fill="#cfe0f2" stroke="#53708f" /><path d="M1 14h18v3H1z" fill="#7d93ad" /></S>}>Tcl Console</BTab>
      <BTab w={97} icon={<S s={16}><ellipse cx="10" cy="9" rx="9" ry="7" fill="#bcdcf6" stroke="#72a5d4" /><path d="M4 14l-2 4 6-3" fill="#bcdcf6" stroke="#72a5d4" /></S>}>Messages</BTab>
      <BTab w={76} icon={<S s={16}><rect x="8" y="3" width="9" height="14" rx="2" fill="#eec55a" stroke="#7d5d10" /><path d="M8 6H2M8 10H2M8 14H2" stroke="#7d5d10" strokeWidth="1.400" /></S>}>Power</BTab>
      <BTab w={92} icon={<S s={16}><rect x="3" y="1" width="14" height="18" fill="#cfe0f2" stroke="#4f7fb5" /><rect x="5.500" y="3.500" width="9" height="4" fill="#4f7fb5" /><path d="M6 11h2M11 11h3M6 15h2M11 15h3" stroke="#777" strokeWidth="1.500" /></S>}><span className="text-[12.3px]">Utilization</span></BTab>
      <BTab w={90} active icon={<S s={16}><rect x="8" y="0.500" width="4" height="2.500" fill="#777" /><circle cx="10" cy="11.500" r="7.500" fill="#5a9fe0" stroke="#3b6fa8" /><circle cx="10" cy="11.500" r="4.500" fill="#a9d3f5" /><path d="M10 11.500l3-3" stroke="#235" strokeWidth="1.300" /></S>}>Timing</BTab>
    </div>
  </div>
);

export default function App() {
  return (
    <div className="w-[1920px] h-[996px] overflow-hidden flex flex-col bg-[#f0f0f0] font-['Noto_Sans','Open_Sans',sans-serif] border-l border-[#b0b0b0]">
      <div className="h-[29px] bg-white flex items-center pl-[2px] shrink-0">
        <svg width="18" height="20" viewBox="0 0 18 20" className="shrink-0"><path d="M7 1l9 14-5 3-3-5-6 7-1-2z" fill="#e8d44a" /><path d="M1 18l6-8 2 4-6 6z" fill="#6b6a1c" /></svg>
        <span className="ml-[6px] text-[14.2px] text-[#222] whitespace-nowrap">routed.dcp - [C:/Users/stefa/Desktop/kc705_tera10/work/build/outputs/routed.dcp] - Vivado 2015.4</span>
        <div className="flex-1" />
        <div className="flex items-center gap-[41px] pr-[25px]">
          <svg width="14" height="14" viewBox="0 0 14 14"><path d="M1 7h12" stroke="#222" /></svg>
          <svg width="14" height="14" viewBox="0 0 14 14"><path d="M3.500 3V.5h10V10H11" fill="none" stroke="#222" /><rect x=".5" y="3.500" width="10" height="10" fill="none" stroke="#222" /></svg>
          <svg width="14" height="14" viewBox="0 0 14 14"><path d="M1 1l12 12M13 1L1 13" stroke="#222" /></svg>
        </div>
      </div>
      <div className="h-[26px] bg-[#f5f5f5] flex items-center justify-between pl-[7px] pr-[4px] text-[12.5px] text-[#222] shrink-0">
        <div className="flex gap-[19px]">
          {["File", "Edit", "Flow", "Tools", "Window", "Layout", "View", "Help"].map((m) => (
            <span key={m}><span className="underline">{m[0]}</span>{m.slice(1)}</span>
          ))}
        </div>
        <div className="w-[250px] h-[22px] bg-white border border-[#bdbdbd] flex items-center pl-[6px] gap-[1px] text-[13px] text-[#9a9a9a]">
          <svg width="15" height="15" viewBox="0 0 15 15"><circle cx="6" cy="6" r="4.500" fill="none" stroke="#909090" strokeWidth="1.800" /><path d="M9.500 9.500L14 14" stroke="#909090" strokeWidth="2" /></svg>
          <svg width="7" height="5" viewBox="0 0 7 5"><path d="M0 0h7L3.500 5z" fill="#909090" /></svg>
          <span className="ml-[1px] pt-[1px]">Search commands</span>
        </div>
      </div>
      <MainTools />
      <div className="h-[26px] mt-[3px] ml-[1px] mr-[5px] shrink-0 bg-gradient-to-b from-[#e6f0fb] to-[#c2d7ee] border border-[#93b5dc] rounded-[2px] flex items-center justify-between pl-[11px] pr-[6px] text-[14px] text-[#333]">
        <span><span className="font-bold text-[#1c2a3a]">Checkpoint Design</span> - xc7k325tffg900-2</span>
        <svg width="14" height="14" viewBox="0 0 14 14"><path d="M1.500 1.500l11 11M12.500 1.500l-11 11" stroke="#666" strokeWidth="2" /></svg>
      </div>
      <div className="h-[537px] mt-[3px] flex pl-[7px] shrink-0">
        <div className="w-[502px] shrink-0 pt-[4px] flex flex-col">
          <PanelHead title="Netlist" />
          <div className="h-[33px] flex items-center gap-[3px] pl-[2px] shrink-0">
            <div className="w-[27px] flex justify-center"><Hourglass /></div>
            <Schem dim />
            <div className="w-[27px] h-[27px] bg-[#ffc083] border border-[#c9a07c] flex items-center justify-center">
              <S s={20}><rect x="3" y="5" width="14" height="14" fill="#dce9f6" stroke="#5f87b5" /><path d="M8 1h4v5h3l-5 5-5-5h3z" fill="#e39b1c" /><path d="M6 14h8M6 16.500h8" stroke="#5f87b5" /></S>
            </div>
          </div>
          <Netlist />
          <div className="h-[13px] flex items-center justify-center shrink-0"><Dots /></div>
          <PanelHead title="Cell Properties" />
          <CellProps />
        </div>
        <div className="relative">
          <div className="absolute left-[4px] top-[250px]"><Dots v /></div>
        </div>
        <DevicePanel />
      </div>
      <div className="h-[9px] flex items-center justify-center shrink-0"><Dots /></div>
      <Timing />
      <BottomTabs />
    </div>
  );
}
